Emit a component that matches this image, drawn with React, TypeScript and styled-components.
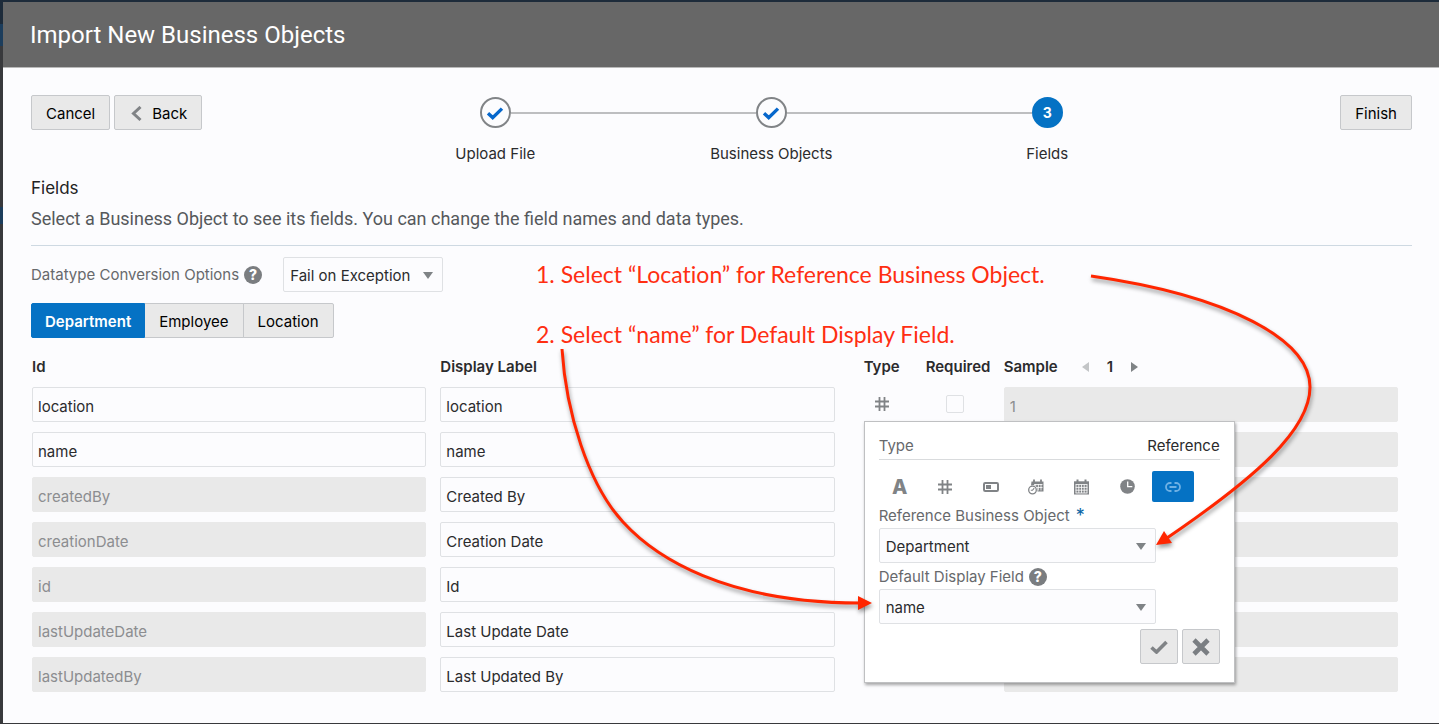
import React from "react";
import styled, { createGlobalStyle } from "styled-components";

const GlobalStyle = createGlobalStyle`
  *, *::before, *::after { box-sizing: border-box; }
  body {
    margin: 0;
    background: #38393c;
    font-family: Inter, "Liberation Sans", sans-serif;
    font-size: 15px;
    line-height: 20px;
    color: #2b2b2d;
  }
  button, input, select { font: inherit; color: inherit; margin: 0; }
`;

const Backdrop = styled.div`
  position: relative;
  min-height: 100vh;
  padding: 2px 0 1px 3px;
  display: flex;
  background: linear-gradient(
    #1d2b3a 0 24px,
    #1c3d5c 24px 46px,
    #38393c 46px 207px,
    #1c3d5c 207px 224px,
    #38393c 224px
  );
`;

const Dialog = styled.main`
  flex: 1;
  min-width: 0;
  background: #fcfcfe;
`;

const Header = styled.header`
  height: 66px;
  padding: 0 27px;
  display: flex;
  align-items: center;
  background: #676767;
  border-bottom: 1px solid #b9b9b9;
`;

const Title = styled.h1`
  margin: 0;
  font-family: Roboto, "Liberation Sans", sans-serif;
  font-size: 24px;
  line-height: 32px;
  font-weight: 400;
  color: #fff;
`;

const Body = styled.div`
  padding: 27px 27px 0 28px;
`;

const TopRow = styled.div`
  display: flex;
  align-items: flex-start;
`;

const ButtonGroup = styled.div`
  display: flex;
  gap: 4px;
`;

const Button = styled.button`
  height: 35px;
  padding: 2px 14px 0;
  display: flex;
  align-items: center;
  gap: 9px;
  background: #e9e9e9;
  border: 1px solid #c6c8cb;
  border-radius: 2px;
  color: #000;
`;

const Train = styled.ol`
  flex: 1;
  max-width: 828px;
  margin: 0 auto;
  padding: 2px 0 0;
  display: flex;
  list-style: none;
`;

const Step = styled.li`
  flex: 1;
  display: flex;
  flex-direction: column;
  align-items: center;
  gap: 16px;
`;

const StepTrack = styled.div`
  width: 100%;
  display: flex;
  align-items: center;
`;

const StepLine = styled.span<{ $hidden?: boolean }>`
  flex: 1;
  height: 2px;
  background: ${(p) => (p.$hidden ? "transparent" : "#bdbec0")};
`;

const StepDot = styled.span<{ $current?: boolean }>`
  width: 31px;
  height: 31px;
  display: flex;
  align-items: center;
  justify-content: center;
  border-radius: 50%;
  border: 2px solid ${(p) => (p.$current ? "#0572c4" : "#818487")};
  background: ${(p) => (p.$current ? "#0572c4" : "#fcfcfe")};
  color: #fff;
  font-size: 14px;
  font-weight: 700;
`;

const Intro = styled.section`
  margin-top: 12px;
  padding-bottom: 14px;
  border-bottom: 1px solid #ced9e2;
`;

const Heading = styled.h2`
  margin: 0 0 7px;
  font-size: 17px;
  line-height: 24px;
  font-weight: 400;
  color: #222;
`;

const Description = styled.p`
  margin: 0;
  font-family: Roboto, "Liberation Sans", sans-serif;
  font-size: 18px;
  line-height: 24px;
  color: #55585b;
`;

const OptionRow = styled.div`
  margin-top: 11px;
  display: flex;
  align-items: center;
`;

const Label = styled.label`
  color: #67696c;
`;

const HelpButton = styled.button`
  width: 18px;
  height: 18px;
  margin-left: 5px;
  padding: 0;
  border: 0;
  border-radius: 50%;
  background: #7a7d80;
  color: #fff;
  font-size: 14px;
  line-height: 18px;
  font-weight: 800;
  text-align: center;
`;

const SelectBox = styled.span<{ $width: number; $gap?: number }>`
  position: relative;
  display: block;
  width: ${(p) => p.$width}px;
  margin-left: ${(p) => p.$gap || 0}px;
  svg {
    position: absolute;
    right: 10px;
    top: 15px;
    pointer-events: none;
  }
`;

const Select = styled.select`
  appearance: none;
  width: 100%;
  height: 35px;
  padding: 2px 24px 0 6px;
  display: block;
  background: #fcfcfe;
  border: 1px solid #dfe1e4;
  border-radius: 2px;
`;

const Tabs = styled.div`
  margin-top: 11px;
  display: flex;
`;

const Tab = styled.button<{ $active?: boolean }>`
  height: 35px;
  padding: 2px ${(p) => (p.$active ? 13 : 14)}px 0;
  border: 1px solid ${(p) => (p.$active ? "#0572c4" : "#c6c8cb")};
  background: ${(p) => (p.$active ? "#0572c4" : "#e9e9e9")};
  color: ${(p) => (p.$active ? "#fff" : "#000")};
  font-weight: ${(p) => (p.$active ? 600 : 400)};
  & + & { border-left-width: 0; }
  & + & + & { border-left-width: 1px; margin-left: -1px; }
  &:first-child { border-radius: 2px 0 0 2px; }
  &:last-child { border-radius: 0 2px 2px 0; }
`;

const Table = styled.table`
  width: calc(100% - 1px);
  margin: 14px 0 26px 1px;
  table-layout: fixed;
  border-collapse: collapse;
`;

const HeadCell = styled.th<{ $width?: number }>`
  width: ${(p) => (p.$width ? p.$width + "px" : "auto")};
  height: 30px;
  padding: 0;
  text-align: left;
  font-weight: 600;
  white-space: nowrap;
`;

const TypeHead = styled(HeadCell)`
  padding-left: 15px;
`;

const Pager = styled.span`
  display: inline-flex;
  align-items: center;
  gap: 18px;
  margin-left: 24px;
`;

const PagerButton = styled.button`
  padding: 0;
  display: flex;
  border: 0;
  background: none;
`;

const Cell = styled.td`
  height: 45px;
  padding: 5px 14px 5px 0;
`;

const TypeCell = styled.td`
  position: relative;
  padding: 0 0 2px 26px;
`;

const CheckCell = styled.td`
  padding: 0 0 2px 20px;
`;

const TextInput = styled.input`
  width: 100%;
  height: 35px;
  padding: 4px 5px 0;
  display: block;
  background: #fcfcfe;
  border: 1px solid #dfe1e4;
  border-radius: 2px;
  &:disabled {
    background: #e9e9e9;
    border-color: #e9e9e9;
    color: #8c8d90;
  }
`;

const Checkbox = styled.input`
  appearance: none;
  width: 18px;
  height: 18px;
  display: block;
  background: #fcfcfe;
  border: 1px solid #dfe1e4;
  border-radius: 2px;
`;

const IconButton = styled.button`
  padding: 0;
  display: flex;
  border: 0;
  background: none;
`;

const Popover = styled.div`
  position: absolute;
  z-index: 2;
  left: 15px;
  top: 39px;
  width: 371px;
  padding: 14px 14px 18px;
  background: #fff;
  border: 1px solid #bfc0c2;
  box-shadow: 1px 2px 3px rgba(0, 0, 0, 0.35);
`;

const PopHeader = styled.div`
  display: flex;
  justify-content: space-between;
  padding-bottom: 3px;
  border-bottom: 1px solid #d9dbdd;
`;

const Muted = styled.span`
  color: #67696c;
`;

const TypeList = styled.div`
  width: 315px;
  margin-top: 11px;
  display: flex;
  justify-content: space-between;
`;

const TypeButton = styled.button<{ $active?: boolean }>`
  width: 42px;
  height: 31px;
  padding: 0;
  display: flex;
  align-items: center;
  justify-content: center;
  border: 0;
  border-radius: 2px;
  background: ${(p) => (p.$active ? "#0572c4" : "transparent")};
`;

const LetterIcon = styled.span`
  font-size: 20px;
  line-height: 20px;
  font-weight: 800;
  color: #808386;
`;

const FieldLabel = styled.div`
  height: 26px;
  padding-top: 2px;
  display: flex;
  align-items: center;
`;

const Asterisk = styled.span`
  margin-left: 6px;
  font-size: 18px;
  line-height: 20px;
  color: #0a65a5;
`;

const PopActions = styled.div`
  margin-top: 5px;
  display: flex;
  justify-content: flex-end;
  gap: 4px;
`;

const ActionButton = styled(Button)`
  width: 38px;
  padding: 0;
  justify-content: center;
`;

const Overlay = styled.div`
  position: absolute;
  z-index: 3;
  left: 0;
  top: 0;
  pointer-events: none;
`;

const Arrows = styled.svg`
  display: block;
  filter: drop-shadow(1px 3px 2px rgba(0, 0, 0, 0.4));
`;

const Note = styled.p<{ $top: number }>`
  position: absolute;
  left: 536px;
  top: ${(p) => p.$top}px;
  margin: 0;
  font-family: Lato, "Liberation Sans", sans-serif;
  font-size: 23px;
  line-height: 30px;
  font-variant-ligatures: none;
  white-space: nowrap;
  color: #ff2e12;
`;

const Caret = () => (
  <svg width="10" height="7" viewBox="0 0 10 7" aria-hidden="true">
    <path d="M0 0H10L5 7Z" fill="#7f8386" />
  </svg>
);

const StepCheck = () => (
  <svg width="18" height="14" viewBox="0 0 18 14" aria-hidden="true">
    <path d="M2 7.3L6.7 11.6L16 2.6" fill="none" stroke="#0667cc" strokeWidth="3.4" />
  </svg>
);

const Help = () => (
  <HelpButton type="button" aria-label="Help">
    ?
  </HelpButton>
);

const HashIcon = () => (
  <svg width="14" height="14" viewBox="0 0 14 14" aria-hidden="true">
    <path d="M4.5 0V14M9.5 0V14M0 4.5H14M0 9.5H14" fill="none" stroke="#808386" strokeWidth="1.8" />
  </svg>
);

const BooleanIcon = () => (
  <svg width="16" height="10" viewBox="0 0 16 10" aria-hidden="true">
    <rect x="1" y="1" width="14" height="8" rx="1.2" fill="none" stroke="#808386" strokeWidth="2" />
    <rect x="3" y="3" width="5" height="4" fill="#808386" />
  </svg>
);

const DateTimeIcon = () => (
  <svg width="16" height="16" viewBox="0 0 16 16" aria-hidden="true">
    <path d="M3.5 2.5H15.5V12.5H9.5V9L6.5 6L3 6.5Z" fill="#808386" />
    <path d="M6 0.5V3M13 0.5V3" stroke="#808386" strokeWidth="1.8" />
    <path d="M6 5.5H14.5M8 8.5H14.5M7.7 5V7.5M10.4 5V11.5M13 5V11.5" stroke="#fff" strokeWidth="0.8" />
    <circle cx="4.5" cy="11" r="3.8" fill="#fff" stroke="#808386" strokeWidth="1.3" />
    <path d="M6.2 9.2L4.5 11.3H2.8" fill="none" stroke="#808386" strokeWidth="1.1" />
  </svg>
);

const CalendarIcon = () => (
  <svg width="15" height="16" viewBox="0 0 15 16" aria-hidden="true">
    <path d="M0 2.3H15V15.5H0Z" fill="#808386" />
    <path d="M3.5 0.5V4M11.5 0.5V4" stroke="#808386" strokeWidth="2" />
    <path
      d="M1.6 5.5H13.4M1.6 8.4H13.4M1.6 11.2H13.4M1.6 14H13.4M2 5.5V14M4.8 5.5V14M7.5 5.5V14M10.2 5.5V14M13 5.5V14"
      stroke="#fff"
      strokeWidth="0.8"
    />
  </svg>
);

const ClockIcon = () => (
  <svg width="15" height="15" viewBox="0 0 15 15" aria-hidden="true">
    <circle cx="7.5" cy="7.5" r="7.3" fill="#808386" />
    <path d="M7.7 2.5V7.6H12.3" fill="none" stroke="#fff" strokeWidth="1.3" />
  </svg>
);

const LinkIcon = () => (
  <svg width="16" height="10" viewBox="0 0 16 10" aria-hidden="true">
    <path
      d="M6.5 1H5A4 4 0 0 0 5 9H6.5M9.5 1H11A4 4 0 0 1 11 9H9.5M4.5 5H11.5"
      fill="none"
      stroke="#6fb1e4"
      strokeWidth="1.8"
    />
  </svg>
);

const types = [
  { name: "String", icon: <LetterIcon>A</LetterIcon> },
  { name: "Number", icon: <HashIcon /> },
  { name: "Boolean", icon: <BooleanIcon /> },
  { name: "Date and time", icon: <DateTimeIcon /> },
  { name: "Date", icon: <CalendarIcon /> },
  { name: "Time", icon: <ClockIcon /> },
  { name: "Reference", icon: <LinkIcon /> },
];

const fields = [
  { id: "location", label: "location", sample: "1" },
  { id: "name", label: "name" },
  { id: "createdBy", label: "Created By", system: true },
  { id: "creationDate", label: "Creation Date", system: true },
  { id: "id", label: "Id", system: true },
  { id: "lastUpdateDate", label: "Last Update Date", system: true },
  { id: "lastUpdatedBy", label: "Last Updated By", system: true },
];

const steps = ["Upload File", "Business Objects", "Fields"];

function TypePopover() {
  return (
    <Popover role="dialog" aria-label="Type">
      <PopHeader>
        <Muted>Type</Muted>
        <span>Reference</span>
      </PopHeader>
      <TypeList>
        {types.map((t) => (
          <TypeButton key={t.name} type="button" aria-label={t.name} $active={t.name === "Reference"}>
            {t.icon}
          </TypeButton>
        ))}
      </TypeList>
      <FieldLabel>
        <Label htmlFor="reference-object">Reference Business Object</Label>
        <Asterisk>*</Asterisk>
      </FieldLabel>
      <SelectBox $width={277}>
        <Select id="reference-object" defaultValue="Department">
          <option>Department</option>
        </Select>
        <Caret />
      </SelectBox>
      <FieldLabel>
        <Label htmlFor="display-field">Default Display Field</Label>
        <Help />
      </FieldLabel>
      <SelectBox $width={277}>
        <Select id="display-field" defaultValue="name">
          <option>name</option>
        </Select>
        <Caret />
      </SelectBox>
      <PopActions>
        <ActionButton type="button" aria-label="Apply">
          <svg width="18" height="14" viewBox="0 0 18 14">
            <path d="M1.5 7.5L6.5 12L16.5 2" fill="none" stroke="#808386" strokeWidth="3.6" />
          </svg>
        </ActionButton>
        <ActionButton type="button" aria-label="Discard">
          <svg width="18" height="18" viewBox="0 0 18 18">
            <path d="M2 2L16 16M16 2L2 16" fill="none" stroke="#7a7e82" strokeWidth="4.6" />
          </svg>
        </ActionButton>
      </PopActions>
    </Popover>
  );
}

export default function App() {
  return (
    <>
      <GlobalStyle />
      <Backdrop>
        <Dialog>
          <Header>
            <Title>Import New Business Objects</Title>
          </Header>
          <Body>
            <TopRow>
              <ButtonGroup>
                <Button type="button">Cancel</Button>
                <Button type="button">
                  <svg width="14" height="16" viewBox="0 0 14 16" aria-hidden="true">
                    <path d="M11.5 1L4.5 7.5L11.5 14" fill="none" stroke="#808386" strokeWidth="3" />
                  </svg>
                  Back
                </Button>
              </ButtonGroup>
              <Train>
                {steps.map((name, i) => (
                  <Step key={name}>
                    <StepTrack>
                      <StepLine $hidden={i === 0} />
                      <StepDot $current={i === 2}>{i === 2 ? "3" : <StepCheck />}</StepDot>
                      <StepLine $hidden={i === 2} />
                    </StepTrack>
                    <span>{name}</span>
                  </Step>
                ))}
              </Train>
              <Button type="button">Finish</Button>
            </TopRow>

            <Intro>
              <Heading>Fields</Heading>
              <Description>
                Select a Business Object to see its fields. You can change the field names and data types.
              </Description>
            </Intro>

            <OptionRow>
              <Label htmlFor="conversion">Datatype Conversion Options</Label>
              <Help />
              <SelectBox $width={160} $gap={21}>
                <Select id="conversion" defaultValue="Fail on Exception">
                  <option>Fail on Exception</option>
                </Select>
                <Caret />
              </SelectBox>
            </OptionRow>

            <Tabs>
              <Tab type="button" $active>Department</Tab>
              <Tab type="button">Employee</Tab>
              <Tab type="button">Location</Tab>
            </Tabs>

            <Table>
              <thead>
                <tr>
                  <HeadCell>Id</HeadCell>
                  <HeadCell>Display Label</HeadCell>
                  <TypeHead $width={77}>Type</TypeHead>
                  <HeadCell $width={78}>Required</HeadCell>
                  <HeadCell>
                    Sample
                    <Pager>
                      <PagerButton type="button" aria-label="Previous sample">
                        <svg width="7" height="10" viewBox="0 0 7 10">
                          <path d="M7 0V10L0 5Z" fill="#c3c5c7" />
                        </svg>
                      </PagerButton>
                      1
                      <PagerButton type="button" aria-label="Next sample">
                        <svg width="7" height="10" viewBox="0 0 7 10">
                          <path d="M0 0V10L7 5Z" fill="#7f8386" />
                        </svg>
                      </PagerButton>
                    </Pager>
                  </HeadCell>
                </tr>
              </thead>
              <tbody>
                {fields.map((f, i) => (
                  <tr key={f.id}>
                    <Cell>
                      <TextInput aria-label="Id" defaultValue={f.id} disabled={f.system} />
                    </Cell>
                    <Cell>
                      <TextInput aria-label="Display Label" defaultValue={f.label} />
                    </Cell>
                    <TypeCell>
                      {i === 0 && (
                        <>
                          <IconButton type="button" aria-label="Number">
                            <HashIcon />
                          </IconButton>
                          <TypePopover />
                        </>
                      )}
                    </TypeCell>
                    <CheckCell>{i === 0 && <Checkbox type="checkbox" aria-label="Required" />}</CheckCell>
                    <Cell>
                      <TextInput aria-label="Sample" defaultValue={f.sample || ""} disabled />
                    </Cell>
                  </tr>
                ))}
              </tbody>
            </Table>
          </Body>
        </Dialog>

        <Overlay>
          <Arrows width="1320" height="620" viewBox="0 0 1320 620" aria-hidden="true">
            <g fill="none" stroke="#ff2600" strokeWidth="3">
              <path d="M1091 276C1230 296 1310 340 1310 387C1310 430 1255 478 1167 538" />
              <path d="M562 349C566 412 588 484 623 522C655 557 725 603 860 603" />
            </g>
            <path d="M1156 545L1164 531L1172 543Z" fill="#ff2600" />
            <path d="M872 603L858 596V610Z" fill="#ff2600" />
          </Arrows>
          <Note $top={259}>1. Select “Location” for Reference Business Object.</Note>
          <Note $top={319}>2. Select “name” for Default Display Field.</Note>
        </Overlay>
      </Backdrop>
    </>
  );
}
